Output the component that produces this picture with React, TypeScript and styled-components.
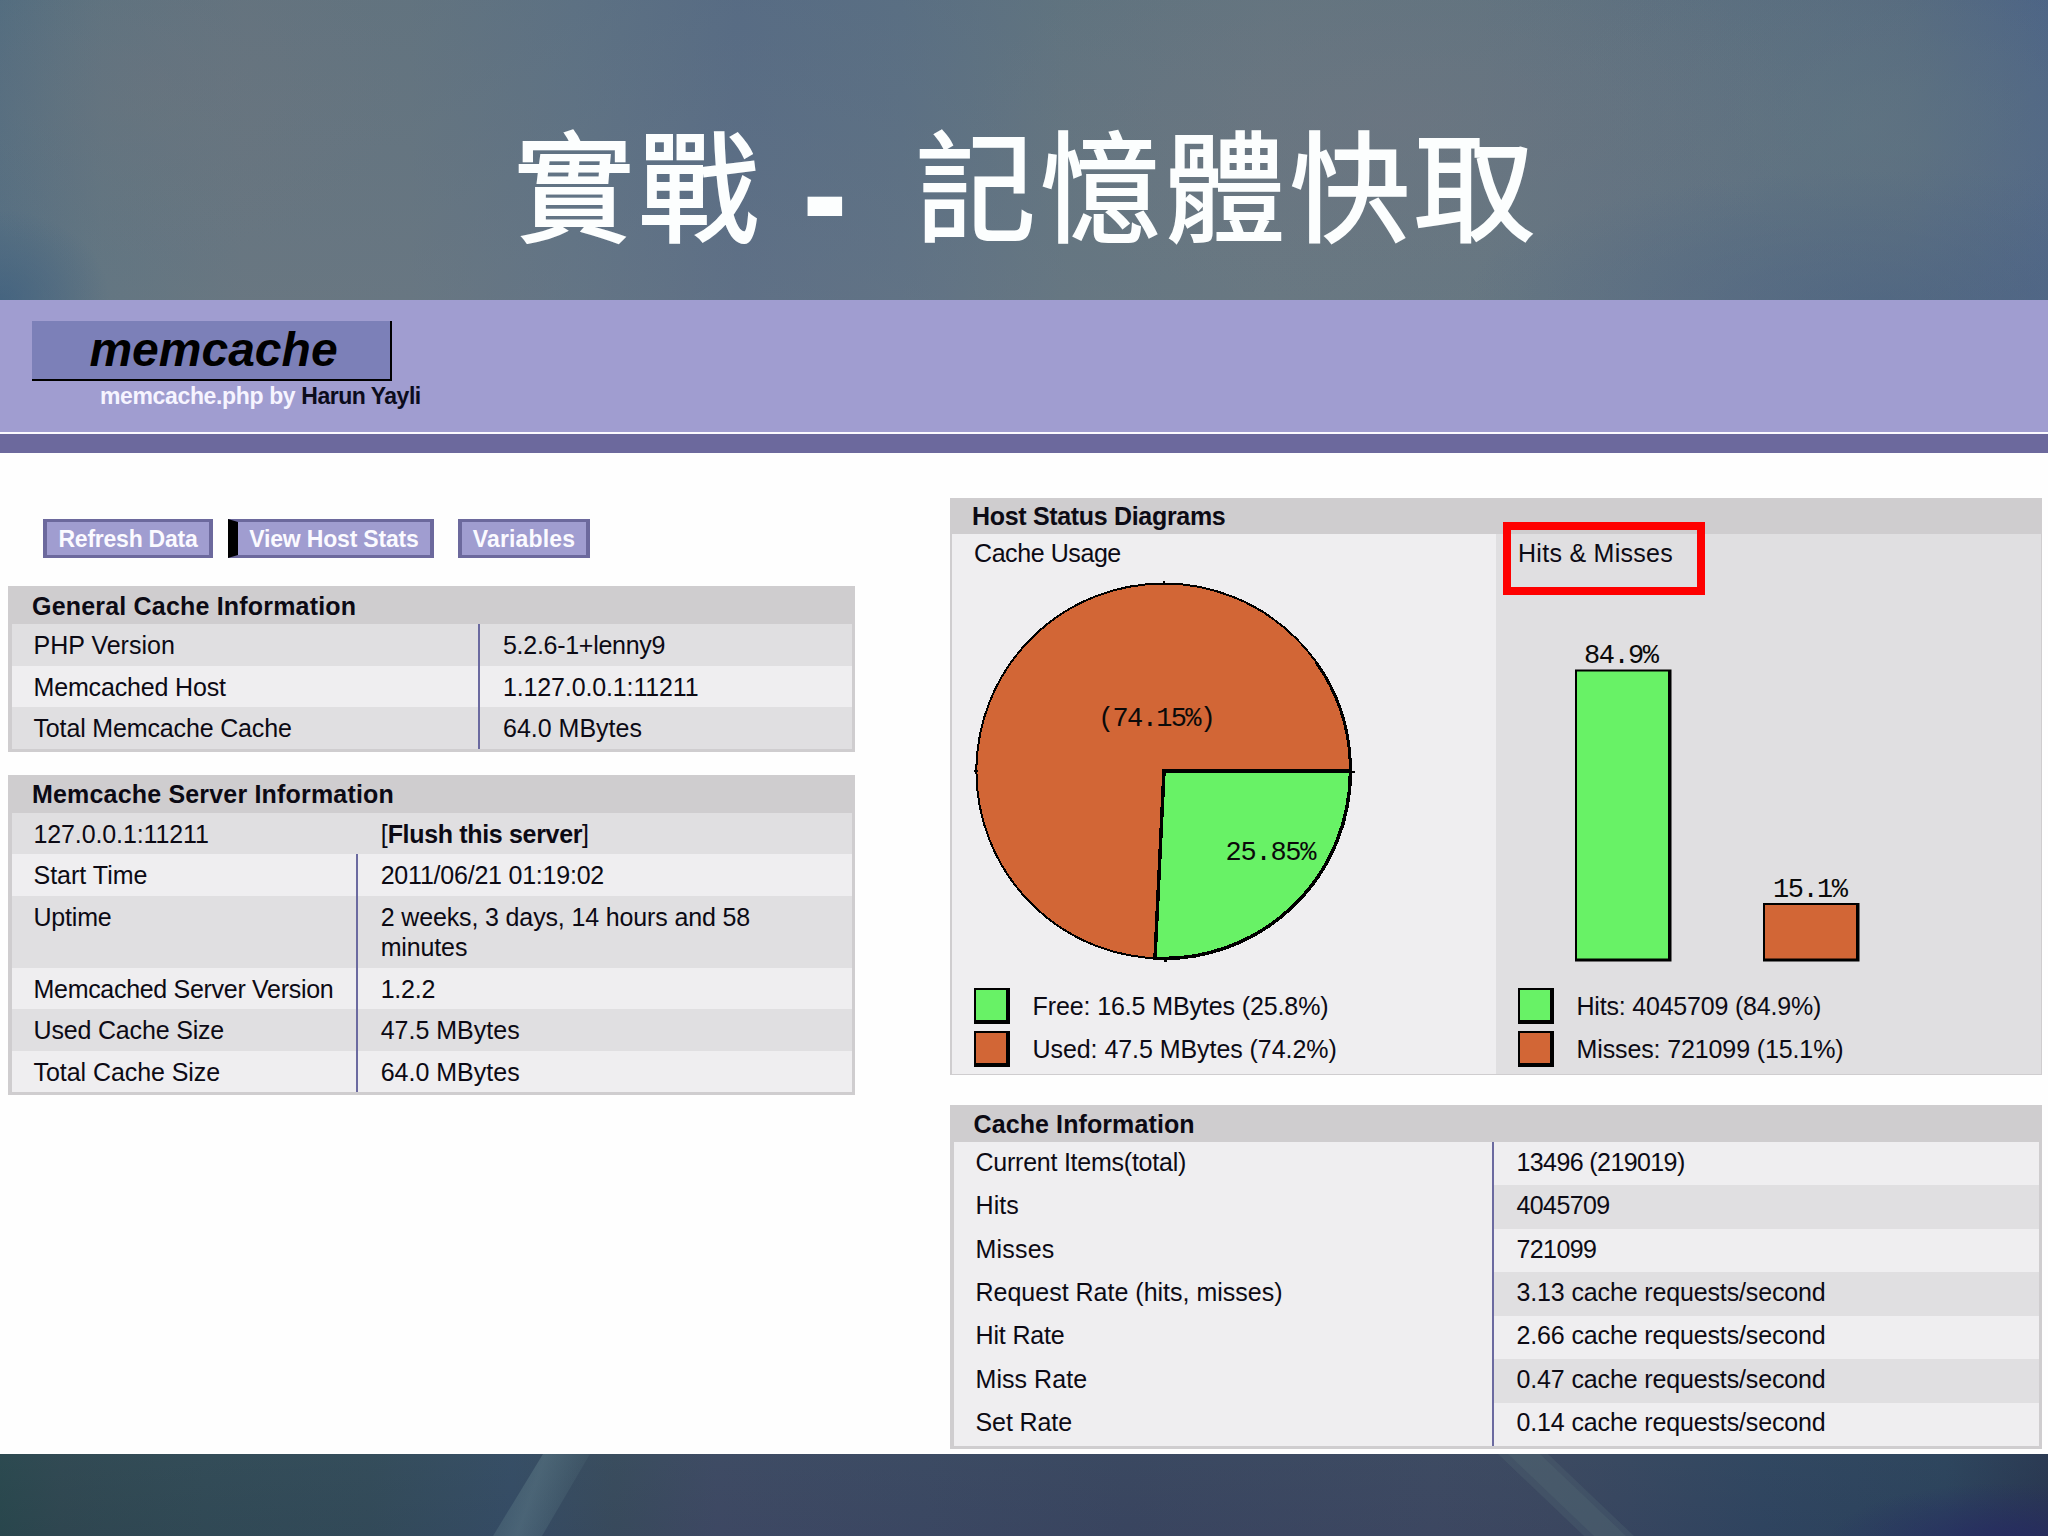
import React from "react";
import styled, { createGlobalStyle, css } from "styled-components";

const colors = {
  head: "#cfcdcf",
  dark: "#e0dfe1",
  light: "#efeef0",
  rule: "#6b6aa0",
  lilac: "#a09dd0",
  violet: "#6c699d",
  green: "#68f266",
  orange: "#d26636",
  ink: "#0c0a14",
};

const GlobalStyle = createGlobalStyle`
  * { box-sizing: border-box; }
  body {
    margin: 0;
    background: #3d4963;
    font-family: "Liberation Sans", Arial, "Noto Sans CJK TC", sans-serif;
    color: ${colors.ink};
  }
`;

const Slide = styled.div`
  width: 2048px;
  height: 1536px;
  display: grid;
  grid-template-rows: 300px 1154px 82px;
  overflow: hidden;
`;

const SlideHeader = styled.header`
  display: flex;
  background:
    radial-gradient(ellipse 110px 90px at 0% 100%, rgba(56, 92, 126, 0.6), transparent 100%),
    radial-gradient(ellipse 420px 130px at 92% 100%, rgba(72, 98, 130, 0.55), transparent 100%),
    radial-gradient(ellipse 260px 170px at 7% 30%, rgba(110, 116, 126, 0.4), transparent 100%),
    radial-gradient(ellipse 420px 190px at 68% 40%, rgba(112, 117, 130, 0.5), transparent 100%),
    radial-gradient(ellipse 320px 190px at 91% 42%, rgba(98, 120, 130, 0.5), transparent 100%),
    linear-gradient(180deg, rgba(86, 110, 128, 0.25), rgba(108, 122, 136, 0.35)),
    linear-gradient(
      90deg,
      #4f6c80 0%, #5f747f 5%, #67757e 12%, #66757f 20%, #5f7284 28%, #586b85 36%,
      #5b6f84 44%, #63757f 52%, #67777f 62%, #64767f 72%, #5e7080 82%, #56697f 93%, #486088 100%
    );
`;

const Title = styled.h1`
  margin: 0;
  padding: 91px 0 0 514px;
  font-family: "Noto Sans CJK TC", sans-serif;
  font-size: 120px;
  line-height: 180px;
  height: 300px;
  font-weight: 400;
  letter-spacing: 4.6px;
  color: #fcfefe;
  white-space: pre;
  -webkit-text-stroke: 2px #fcfefe;
`;

const Dash = styled.span`
  margin: 0 10px 0 12px;
  vertical-align: -2px;
  line-height: 1;
  font-family: "Liberation Sans", Arial, sans-serif;
  font-size: 112px;
  font-weight: 700;
  letter-spacing: 0;
  -webkit-text-stroke: 6px #fcfefe;
`;

const SlideFooter = styled.footer`
  background:
    radial-gradient(ellipse 180px 60px at 98% 108%, rgba(38, 40, 100, 0.8), transparent 100%),
    linear-gradient(180deg, rgba(60, 80, 100, 0.25), rgba(50, 58, 90, 0.15)),
    linear-gradient(
      90deg,
      #27484a 0%, #2e484e 3%, #304b54 10%, #324c58 18%, #354e66 25%, #394c5c 30%,
      #3f4a64 35%, #3c4963 45%, #3a4660 55%, #3e4962 70%, #3c4860 76%, #2e4560 86%, #2a435c 95%, #26344e 100%
    );
`;

const Page = styled.main`
  display: flex;
  flex-direction: column;
  background: #fefefe;
`;

const Banner = styled.div`
  height: 134px;
  padding: 21px 0 0 32px;
  background: ${colors.lilac};
  border-bottom: 2px solid #fbfaff;
`;

const Logo = styled.div`
  width: 360px;
  height: 60px;
  padding-left: 5px;
  display: flex;
  align-items: center;
  justify-content: center;
  background: #7c80b8;
  border-right: 2px solid #000;
  border-bottom: 2px solid #000;
  color: #000;
  font: italic 700 48px/58px "Liberation Sans", Arial, sans-serif;
`;

const Byline = styled.div`
  padding-left: 68px;
  font-size: 23px;
  font-weight: 700;
  line-height: 30px;
  color: #f6f4ff;
  letter-spacing: -0.36px;
`;

const Author = styled.span`
  color: #0c0c1c;
  letter-spacing: -0.5px;
`;

const BannerStrip = styled.div`
  height: 19px;
  background: ${colors.violet};
`;

const Columns = styled.div`
  flex: 1;
  display: flex;
  gap: 95px;
  padding-left: 8px;
`;

const LeftColumn = styled.div`
  width: 847px;
  padding-top: 66px;
`;

const RightColumn = styled.div`
  width: 1092px;
  padding-top: 45px;
  display: flex;
  flex-direction: column;
  gap: 30px;
`;

const Menu = styled.nav`
  display: flex;
  padding-left: 35px;
  margin-bottom: 28px;
`;

const MenuButton = styled.a<{ $width: number; $gap?: number; $active?: boolean; $track?: number }>`
  width: ${(p) => p.$width}px;
  height: 39px;
  margin-left: ${(p) => p.$gap ?? 0}px;
  padding-top: 2px;
  display: flex;
  align-items: center;
  justify-content: center;
  border: solid ${colors.violet};
  border-width: 3px 4px;
  background: ${colors.lilac};
  color: #fbfaff;
  font-size: 23px;
  font-weight: 700;
  letter-spacing: ${(p) => p.$track ?? 0}px;
  ${(p) =>
    p.$active &&
    css`
      border-left: 10px solid #000;
    `}
`;

const Panel = styled.section<{ $height: number; $side?: number; $bottom?: number }>`
  height: ${(p) => p.$height}px;
  display: flex;
  flex-direction: column;
  border: solid ${colors.head};
  border-width: 0 ${(p) => (p.$side ?? 4) - 1}px ${(p) => p.$bottom ?? 3}px ${(p) => p.$side ?? 4}px;
`;

const LeftPanels = styled.div`
  display: flex;
  flex-direction: column;
  gap: 23px;
`;

const PanelTitle = styled.h2<{ $height: number; $indent: number; $track: number; $top?: number }>`
  margin: 0;
  height: ${(p) => p.$height}px;
  flex: none;
  padding: ${(p) => p.$top ?? 1}px 0 0 ${(p) => p.$indent}px;
  line-height: ${(p) => p.$height}px;
  background: ${colors.head};
  font-size: 25px;
  font-weight: 700;
  letter-spacing: ${(p) => p.$track}px;
`;

const Row = styled.div<{ $tone: "dark" | "light"; $label: number; $grow?: number }>`
  flex: ${(p) => p.$grow ?? 41.5} 1 0;
  min-height: 0;
  display: grid;
  grid-template-columns: ${(p) => p.$label}px 1fr;
  background: ${(p) => colors[p.$tone]};
  font-size: 25px;
  line-height: 30px;
`;

const Label = styled.div<{ $top?: number; $plain?: boolean; $track?: number }>`
  padding: ${(p) => p.$top ?? 6}px 0 0 21.5px;
  letter-spacing: ${(p) => p.$track ?? 0}px;
  white-space: nowrap;
  ${(p) =>
    p.$plain &&
    css`
      background: ${colors.light};
    `}
`;

const Value = styled.div<{ $top?: number; $indent?: number; $rule?: boolean; $track?: number }>`
  padding: ${(p) => p.$top ?? 6}px 90px 0 ${(p) => p.$indent ?? 23}px;
  border-left: 2px solid ${(p) => (p.$rule === false ? "transparent" : colors.rule)};
  letter-spacing: ${(p) => p.$track ?? 0}px;
`;

const FlushLink = styled.b`
  letter-spacing: -0.33px;
`;

const Diagrams = styled.div`
  flex: 1;
  display: grid;
  grid-template-columns: 544px 1fr;
`;

const Diagram = styled.div<{ $tone: "dark" | "light"; $indent: number }>`
  padding-left: ${(p) => p.$indent}px;
  background: ${(p) => colors[p.$tone]};
`;

const DiagramName = styled.div<{ $track: number }>`
  position: relative;
  height: 39px;
  line-height: 39px;
  font-size: 25px;
  letter-spacing: ${(p) => p.$track}px;
`;

const Highlight = styled.span`
  position: absolute;
  left: -15px;
  top: -12px;
  width: 202px;
  height: 73px;
  border: 8.5px solid #fe0000;
`;

const Chart = styled.svg`
  display: block;
  overflow: visible;
`;

const ChartText = styled.text`
  font-family: "Liberation Mono", monospace;
  font-size: 27px;
  fill: #0a0a0a;
`;

const LegendItem = styled.div<{ $track?: number }>`
  display: flex;
  align-items: center;
  gap: 22.5px;
  height: 36px;
  margin-bottom: 7px;
  font-size: 25px;
  letter-spacing: ${(p) => p.$track ?? 0}px;
`;

const Swatch = styled.span<{ $color: string }>`
  width: 36px;
  height: 36px;
  background: ${(p) => p.$color};
  border: solid #000;
  border-width: 2px 4px 4px 2px;
`;

type Entry = { label: string; value: string; lt?: number; vt?: number };

const general: Entry[] = [
  { label: "PHP Version", value: "5.2.6-1+lenny9", lt: 0, vt: -0.28 },
  { label: "Memcached Host", value: "1.127.0.0.1:11211", lt: -0.15, vt: -0.14 },
  { label: "Total Memcache Cache", value: "64.0 MBytes", lt: -0.15, vt: 0 },
];

const server: (Entry & { grow?: number })[] = [
  { label: "Start Time", value: "2011/06/21 01:19:02", vt: -0.22 },
  { label: "Uptime", value: "2 weeks, 3 days, 14 hours and 58 minutes", lt: -0.2, vt: -0.14, grow: 72 },
  { label: "Memcached Server Version", value: "1.2.2", lt: -0.3, vt: -0.22 },
  { label: "Used Cache Size", value: "47.5 MBytes", lt: -0.17, vt: 0 },
  { label: "Total Cache Size", value: "64.0 MBytes", lt: -0.06, vt: 0 },
];

const cache: Entry[] = [
  { label: "Current Items(total)", value: "13496 (219019)", lt: -0.24, vt: -0.6 },
  { label: "Hits", value: "4045709", lt: 0.1, vt: -0.6 },
  { label: "Misses", value: "721099", lt: 0.2, vt: -0.6 },
  { label: "Request Rate (hits, misses)", value: "3.13 cache requests/second", vt: -0.14 },
  { label: "Hit Rate", value: "2.66 cache requests/second", lt: -0.15, vt: -0.14 },
  { label: "Miss Rate", value: "0.47 cache requests/second", lt: 0.05, vt: -0.14 },
  { label: "Set Rate", value: "0.14 cache requests/second", lt: -0.1, vt: -0.14 },
];

const tone = (dark: boolean) => (dark ? "dark" : "light");

function Rays() {
  return (
    <SlideFooter>
      <Chart width="2048" height="82" viewBox="0 0 2048 82">
        <defs>
          <linearGradient id="ray" x1="0" x2="1" y1="0" y2="0.3">
            <stop offset="0" stopColor="#5f8088" stopOpacity="0.1" />
            <stop offset="0.5" stopColor="#5f7c88" stopOpacity="0.5" />
            <stop offset="1" stopColor="#5f8088" stopOpacity="0.05" />
          </linearGradient>
        </defs>
        <polygon points="543,0 590,0 542,82 493,82" fill="url(#ray)" />
        <polygon points="1498,0 1548,0 1634,82 1584,82" fill="#567078" fillOpacity="0.25" />
        <polygon points="1508,0 1540,0 1626,82 1594,82" fill="#567078" fillOpacity="0.25" />
      </Chart>
    </SlideFooter>
  );
}

function UsagePie() {
  return (
    <Chart width="400" height="415" viewBox="974 573 400 415" shapeRendering="crispEdges">
      <ellipse cx="1163.7" cy="771" rx="187.3" ry="187.5" fill={colors.orange} stroke="#000" strokeWidth="2" />
      <path
        d="M1164 771 H1350.5 A187 187.5 0 0 1 1155 958.3 Z"
        fill={colors.green}
        stroke="#000"
        strokeWidth="3.5"
      />
      <path d="M1350.5 771 A187 187.5 0 0 0 1316 662" fill="none" stroke="#000" strokeWidth="3" />
      <path d="M1163 582 h2 M974 770.5 h4 M1350 772 h5 M1164 960.5 h3" stroke="#000" strokeWidth="2" />
      <ChartText x="1098" y="726" textLength="118">(74.15%)</ChartText>
      <ChartText x="1225.5" y="859.5" textLength="91">25.85%</ChartText>
    </Chart>
  );
}

function Bar(props: { x: number; y: number; color: string; text: string; tx: number }) {
  const { x, y, color, text, tx } = props;
  return (
    <>
      <rect x={x} y={y} width="96.5" height={961.5 - y} fill="#000" />
      <rect x={x + 2} y={y + 2} width="91" height={961.5 - y - 5} fill={color} />
      <ChartText x={tx} y={y - 6.5} textLength="75">{text}</ChartText>
    </>
  );
}

function HitBars() {
  return (
    <Chart width="400" height="415" viewBox="1517.5 573 400 415">
      <Bar x={1574.5} y={669.5} color={colors.green} text="84.9%" tx={1583.5} />
      <Bar x={1762.5} y={903} color={colors.orange} text="15.1%" tx={1772.5} />
    </Chart>
  );
}

export default function App() {
  return (
    <>
      <GlobalStyle />
      <Slide>
        <SlideHeader>
          <Title>
            實戰<Dash>{" -  "}</Dash>記憶體快取
          </Title>
        </SlideHeader>
        <Page>
          <Banner>
            <Logo>memcache</Logo>
            <Byline>
              memcache.php by <Author>Harun Yayli</Author>
            </Byline>
          </Banner>
          <BannerStrip />
          <Columns>
            <LeftColumn>
              <Menu>
                <MenuButton $width={170} $track={-0.24}>Refresh Data</MenuButton>
                <MenuButton $width={206} $gap={15} $active $track={-0.18}>View Host Stats</MenuButton>
                <MenuButton $width={132} $gap={24} $track={0.15}>Variables</MenuButton>
              </Menu>
              <LeftPanels>
                <Panel $height={166}>
                  <PanelTitle $height={38} $indent={20} $track={0.19}>General Cache Information</PanelTitle>
                  {general.map((e, i) => (
                    <Row key={e.label} $tone={tone(i % 2 === 0)} $label={466}>
                      <Label $track={e.lt}>{e.label}</Label>
                      <Value $track={e.vt}>{e.value}</Value>
                    </Row>
                  ))}
                </Panel>
                <Panel $height={320}>
                  <PanelTitle $height={38} $indent={20} $top={0} $track={0.18}>Memcache Server Information</PanelTitle>
                  <Row $tone="dark" $label={344}>
                    <Label $track={-0.12}>127.0.0.1:11211</Label>
                    <Value $rule={false} $indent={22.7}>
                      [<FlushLink>Flush this server</FlushLink>]
                    </Value>
                  </Row>
                  {server.map((e, i) => (
                    <Row key={e.label} $tone={tone(i % 2 === 1)} $label={344} $grow={e.grow}>
                      <Label $track={e.lt}>{e.label}</Label>
                      <Value $indent={22.7} $track={e.vt}>{e.value}</Value>
                    </Row>
                  ))}
                </Panel>
              </LeftPanels>
            </LeftColumn>
            <RightColumn>
              <Panel $height={577} $side={2} $bottom={2}>
                <PanelTitle $height={36} $indent={20} $top={0} $track={-0.32}>Host Status Diagrams</PanelTitle>
                <Diagrams>
                  <Diagram $tone="light" $indent={22}>
                    <DiagramName $track={-0.42}>Cache Usage</DiagramName>
                    <UsagePie />
                    <LegendItem $track={-0.11}>
                      <Swatch $color={colors.green} />
                      Free: 16.5 MBytes (25.8%)
                    </LegendItem>
                    <LegendItem $track={-0.06}>
                      <Swatch $color={colors.orange} />
                      Used: 47.5 MBytes (74.2%)
                    </LegendItem>
                  </Diagram>
                  <Diagram $tone="dark" $indent={22}>
                    <DiagramName $track={0.28}>
                      Hits &amp; Misses
                      <Highlight />
                    </DiagramName>
                    <HitBars />
                    <LegendItem $track={-0.2}>
                      <Swatch $color={colors.green} />
                      Hits: 4045709 (84.9%)
                    </LegendItem>
                    <LegendItem $track={-0.12}>
                      <Swatch $color={colors.orange} />
                      Misses: 721099 (15.1%)
                    </LegendItem>
                  </Diagram>
                </Diagrams>
              </Panel>
              <Panel $height={344}>
                <PanelTitle $height={37} $indent={19.5} $track={0.1}>Cache Information</PanelTitle>
                {cache.map((e, i) => (
                  <Row key={e.label} $tone={tone(i % 2 === 1)} $label={537.5}>
                    <Label $top={4.7} $track={e.lt} $plain>{e.label}</Label>
                    <Value $top={4.7} $track={e.vt}>{e.value}</Value>
                  </Row>
                ))}
              </Panel>
            </RightColumn>
          </Columns>
        </Page>
        <Rays />
      </Slide>
    </>
  );
}
